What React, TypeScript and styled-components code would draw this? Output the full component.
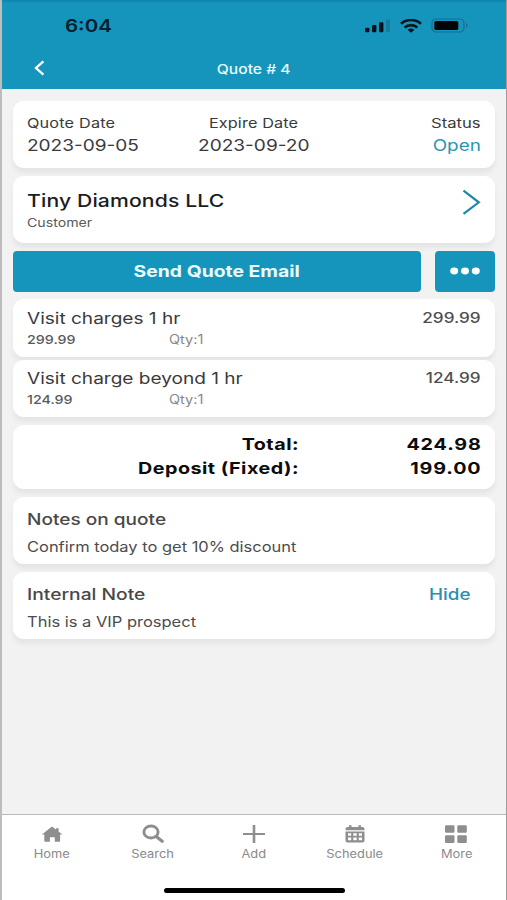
import React from "react";
import styled, { createGlobalStyle } from "styled-components";

const TEAL = "#1695bc";

const GlobalStyle = createGlobalStyle`
  *, *::before, *::after { box-sizing: border-box; }
  body { margin: 0; background: #f2f2f2; font-family: Inter, sans-serif; }
`;

const Screen = styled.div`
  width: 507px;
  height: 900px;
  display: flex;
  flex-direction: column;
  background: #f2f2f2;
  border-left: 2px solid #bdbdbd;
  border-right: 1px solid #9c9c9c;
  overflow: hidden;
`;

/* Wide-set label: the glyphs are stretched horizontally from one edge. */
const Text = styled.span<{
  $size: number;
  $line: number;
  $stretch?: number;
  $weight?: number;
  $color?: string;
  $spacing?: number;
  $origin?: "left" | "center" | "right";
}>`
  display: block;
  width: max-content;
  white-space: nowrap;
  font-size: ${(p) => p.$size}px;
  line-height: ${(p) => p.$line}px;
  font-weight: ${(p) => p.$weight ?? 400};
  letter-spacing: ${(p) => p.$spacing ?? 0}px;
  margin-right: ${(p) => -(p.$spacing ?? 0)}px;
  color: ${(p) => p.$color ?? "#3a3a3c"};
  transform: scaleX(${(p) => p.$stretch ?? 1.2});
  transform-origin: ${(p) => p.$origin ?? "left"} center;
`;

const Header = styled.header`
  height: 89px;
  flex: none;
  background: linear-gradient(#0d82a9 0, ${TEAL} 3px);
  margin: 0 -1px 0 -2px;
  border-left: 1px solid #1580a2;
  border-right: 1px solid #1580a2;
`;

const StatusBar = styled.div`
  height: 50px;
  padding: 2px 37px 0 64px;
  display: flex;
  align-items: center;
  justify-content: space-between;
`;

const StatusIcons = styled.div`
  display: flex;
  align-items: center;
  gap: 9px;
  margin-top: -1px;
`;

const NavBar = styled.div`
  height: 37px;
  display: grid;
  grid-template-columns: 1fr auto 1fr;
  align-items: center;
  padding: 0 31px;
`;

const Content = styled.main`
  flex: 1;
  padding: 12px 11px 0 10.5px;
  display: flex;
  flex-direction: column;
`;

const Card = styled.section<{ $height: number; $top: number; $gap?: number }>`
  flex: none;
  height: ${(p) => p.$height}px;
  margin-bottom: ${(p) => p.$gap ?? 8}px;
  padding: ${(p) => p.$top}px 14px 0 14px;
  background: #fff;
  border-radius: 11px;
  box-shadow: 0 5px 5px rgba(0, 0, 0, 0.055);
`;

const DateGrid = styled.div`
  display: grid;
  grid-template-columns: 1fr auto 1fr;
`;

const Column = styled.div<{ $align: string }>`
  display: flex;
  flex-direction: column;
  align-items: ${(p) => p.$align};
  gap: 2px;
`;

const CustomerRow = styled.div`
  display: flex;
  justify-content: space-between;
`;

const Actions = styled.div`
  flex: none;
  height: 41px;
  margin-bottom: 7.5px;
  display: grid;
  grid-template-columns: 1fr 60px;
  gap: 14px;
`;

const Button = styled.button`
  display: flex;
  align-items: center;
  justify-content: center;
  border: 0;
  padding: 0;
  border-radius: 4px;
  background: ${TEAL};
  font-family: inherit;
`;

const SpreadRow = styled.div`
  display: flex;
  justify-content: space-between;
`;

const ItemDetails = styled.div`
  display: grid;
  grid-template-columns: 142px auto;
  justify-content: start;
  margin-top: 3px;
`;

const Totals = styled.div`
  display: grid;
  grid-template-columns: 272.5px 1fr;
  row-gap: 2px;
  justify-items: end;
`;

const NoteHeading = styled(SpreadRow)`
  margin-bottom: 6px;
`;

const HideLink = styled.div`
  padding-right: 10px;
`;

const TabBar = styled.nav`
  flex: none;
  height: 86px;
  background: #fff;
  border-top: 1px solid #b9b9b9;
  display: flex;
  flex-direction: column;
  justify-content: space-between;
  align-items: center;
  padding-bottom: 7px;
`;

const Tabs = styled.div`
  width: 506px;
  display: grid;
  grid-template-columns: repeat(5, 1fr);
  padding-top: 9px;
`;

const Tab = styled.div`
  display: flex;
  flex-direction: column;
  align-items: center;
  color: #8e8e8e;
  gap: 3px;

  svg { display: block; }
`;

const HomeIndicator = styled.div`
  width: 181px;
  height: 5px;
  border-radius: 3px;
  background: #000;
`;

const BackIcon = () => (
  <svg width="14" height="18" viewBox="0 0 14 18" fill="none">
    <path d="M11.400 1.400 4 8l7.400 6.600" stroke="#fff" strokeWidth="2.3" />
  </svg>
);

const SignalIcon = () => (
  <svg width="26" height="14" viewBox="0 0 26 14">
    <rect x="0" y="8.8" width="4.4" height="4.4" rx="1.2" fill="#03121c" />
    <rect x="7" y="6" width="4.4" height="7.2" rx="1.2" fill="#03121c" />
    <rect x="14" y="3.300" width="4.4" height="9.9" rx="1.2" fill="#03121c" />
    <rect x="21" y="0.5" width="4" height="12.700" rx="1.2" fill="#147da0" />
  </svg>
);

const WifiIcon = () => (
  <svg width="22" height="14" viewBox="0 0 22 14" fill="none" stroke="#03121c" strokeWidth="2.6">
    <path d="M1 4.7C6.5-.2 15.500-.2 21 4.700" />
    <path d="M4.600 8.400c3.700-3.100 9.100-3.100 12.800 0" />
    <path d="M7.600 10.700c2-1.700 4.800-1.700 6.800 0L11 13.700z" fill="#03121c" stroke="none" />
  </svg>
);

const BatteryIcon = () => (
  <svg width="38" height="15" viewBox="0 0 38 15">
    <rect x="1" y="1" width="32" height="13" rx="4" fill="none" stroke="#136f90" strokeWidth="1.2" />
    <rect x="3.300" y="3" width="24" height="9" rx="1.5" fill="#020408" />
    <path d="M35 5.300c2.200.7 2.200 3.700 0 4.400z" fill="#136f90" />
  </svg>
);

const ChevronIcon = () => (
  <svg width="20" height="28" viewBox="0 0 20 28" fill="none">
    <path d="M2.500 1.700 17.800 13.300 2.500 24.900" stroke="#1c88a8" strokeWidth="2.200" />
  </svg>
);

const DotsIcon = () => (
  <svg width="30" height="8" viewBox="0 0 30 8" fill="#fff">
    <ellipse cx="4.200" cy="4" rx="4" ry="3.400" />
    <ellipse cx="15" cy="4" rx="4" ry="3.400" />
    <ellipse cx="25.800" cy="4" rx="4" ry="3.400" />
  </svg>
);

const HomeIcon = () => (
  <svg width="22" height="20" viewBox="0 0 22 20" fill="currentColor">
    <path d="M11 2.500 14.900 5.400V4.200h2.700v3.300l3.700 3h-2.200v6.300q0 1-1 1h-4.300v-4.500H8.900v4.500H4.300q-1 0-1-1v-6.300H.9z" />
  </svg>
);

const SearchIcon = () => (
  <svg width="22" height="20" viewBox="0 0 22 20" fill="none" stroke="currentColor">
    <ellipse cx="9" cy="8" rx="7.100" ry="6" strokeWidth="2.900" />
    <path d="m14.200 12.500 6 4.700" strokeWidth="3.200" strokeLinecap="round" />
  </svg>
);

const AddIcon = () => (
  <svg width="22" height="20" viewBox="0 0 22 20" fill="currentColor">
    <path d="M9.700 1h2.600v7.900H22v2.200h-9.700V19H9.700v-7.900H0V8.900h9.700z" />
  </svg>
);

const ScheduleIcon = () => (
  <svg width="20" height="20" viewBox="0 0 20 20" fill="currentColor">
    <path d="M4 1.200h2.500V3h7V1.200H16V3h1.500q2 0 2 1.700v1.600H.5V4.700Q.5 3 2.500 3H4z" />
    <path
      fillRule="evenodd"
      d="M.5 7.400h19v9.200q0 1.900-2 1.900h-15q-2 0-2-1.900zM3 9.200v2.500h3.200V9.200zM8.300 9.200v2.500h3.400V9.200zM13.800 9.200v2.500H17V9.200zM3 13.500v2.700h3.200v-2.700zM8.300 13.500v2.700h3.400v-2.700zM13.800 13.500v2.700H17v-2.700z"
    />
  </svg>
);

const MoreIcon = () => (
  <svg width="22" height="20" viewBox="0 0 22 20" fill="currentColor">
    <rect x="0" y="1.200" width="9.500" height="7.600" rx="1.200" />
    <rect x="12.300" y="1.200" width="9.500" height="7.600" rx="1.200" />
    <rect x="0" y="11.300" width="9.500" height="7.600" rx="1.200" />
    <rect x="12.300" y="11.300" width="9.500" height="7.600" rx="1.200" />
  </svg>
);

const lineItems = [
  { name: "Visit charges 1 hr", price: "299.99", top: 7.5, gap: 3 },
  { name: "Visit charge beyond 1 hr", price: "124.99", top: 7, gap: 8 },
];

const totals = [
  { label: "Total:", amount: "424.98" },
  { label: "Deposit (Fixed):", amount: "199.00" },
];

const tabs = [
  { label: "Home", Icon: HomeIcon },
  { label: "Search", Icon: SearchIcon },
  { label: "Add", Icon: AddIcon },
  { label: "Schedule", Icon: ScheduleIcon },
  { label: "More", Icon: MoreIcon },
];

export default function App() {
  return (
    <>
      <GlobalStyle />
      <Screen>
        <Header>
          <StatusBar>
            <Text $size={17.5} $line={22} $weight={600} $stretch={1.17} $color="#03202f">6:04</Text>
            <StatusIcons>
              <SignalIcon />
              <WifiIcon />
              <BatteryIcon />
            </StatusIcons>
          </StatusBar>
          <NavBar>
            <BackIcon />
            <Text $size={13} $line={18} $weight={500} $stretch={1.2} $color="#e6fbff" $origin="center">Quote # 4</Text>
          </NavBar>
        </Header>

        <Content>
          <Card $height={66.5} $top={13} $gap={8.5}>
            <DateGrid>
              <Column $align="flex-start">
                <Text $size={13.3} $line={18} $stretch={1.22} $spacing={0.15}>Quote Date</Text>
                <Text $size={16} $line={22} $stretch={1.19}>2023-09-05</Text>
              </Column>
              <Column $align="center">
                <Text $size={13.3} $line={18} $stretch={1.22} $spacing={0.1} $origin="center">Expire Date</Text>
                <Text $size={16} $line={22} $stretch={1.19} $origin="center">2023-09-20</Text>
              </Column>
              <Column $align="flex-end">
                <Text $size={13.3} $line={18} $stretch={1.25} $origin="right">Status</Text>
                <Text $size={16} $line={22} $stretch={1.18} $color="#2a95b5" $origin="right">Open</Text>
              </Column>
            </DateGrid>
          </Card>

          <Card $height={66.5} $top={12.5}>
            <CustomerRow>
              <div>
                <Text $size={17.3} $line={24} $weight={500} $stretch={1.225} $spacing={0.1} $color="#1c1c1e">Tiny Diamonds LLC</Text>
                <Text $size={12} $line={19} $stretch={1.18} $color="#5a5a5c">Customer</Text>
              </div>
              <ChevronIcon />
            </CustomerRow>
          </Card>

          <Actions>
            <Button>
              <Text $size={16} $line={20} $weight={700} $stretch={1.21} $color="#e9fbff" $origin="center">Send Quote Email</Text>
            </Button>
            <Button aria-label="More actions">
              <DotsIcon />
            </Button>
          </Actions>

          {lineItems.map((item) => (
            <Card key={item.name} $height={57.5} $top={item.top} $gap={item.gap}>
              <SpreadRow>
                <Text $size={16} $line={22} $stretch={1.19}>{item.name}</Text>
                <Text $size={14.3} $line={22} $weight={500} $stretch={1.2} $color="#4e4e50" $origin="right">{item.price}</Text>
              </SpreadRow>
              <ItemDetails>
                <Text $size={12} $line={16} $weight={500} $stretch={1.19} $color="#5a5a5c">{item.price}</Text>
                <Text $size={12.5} $line={16} $stretch={1.16} $color="#88888a">Qty:1</Text>
              </ItemDetails>
            </Card>
          ))}

          <Card $height={64} $top={7.5}>
            <Totals>
              {totals.map((row) => (
                <React.Fragment key={row.label}>
                  <Text $size={16.2} $line={22} $weight={700} $stretch={1.22} $spacing={0.4} $color="#0c0c0e" $origin="right">{row.label}</Text>
                  <Text $size={16.2} $line={22} $weight={700} $stretch={1.22} $spacing={0.7} $color="#0c0c0e" $origin="right">{row.amount}</Text>
                </React.Fragment>
              ))}
            </Totals>
          </Card>

          <Card $height={67} $top={12}>
            <NoteHeading>
              <Text $size={15.7} $line={22} $weight={500} $stretch={1.215} $color="#48484a">Notes on quote</Text>
            </NoteHeading>
            <Text $size={14.2} $line={20} $stretch={1.16} $color="#4c4c4e">Confirm today to get 10% discount</Text>
          </Card>

          <Card $height={67} $top={12}>
            <NoteHeading>
              <Text $size={15.7} $line={22} $weight={500} $stretch={1.225} $color="#48484a">Internal Note</Text>
              <HideLink>
                <Text $size={15.7} $line={22} $weight={500} $stretch={1.2} $color="#2c8eac" $origin="right">Hide</Text>
              </HideLink>
            </NoteHeading>
            <Text $size={14.2} $line={20} $stretch={1.162} $color="#4c4c4e">This is a VIP prospect</Text>
          </Card>
        </Content>

        <TabBar>
          <Tabs>
            {tabs.map(({ label, Icon }) => (
              <Tab key={label}>
                <Icon />
                <Text $size={11.2} $line={14} $stretch={1.15} $color="#8a8a8c" $origin="center">{label}</Text>
              </Tab>
            ))}
          </Tabs>
          <HomeIndicator />
        </TabBar>
      </Screen>
    </>
  );
}
